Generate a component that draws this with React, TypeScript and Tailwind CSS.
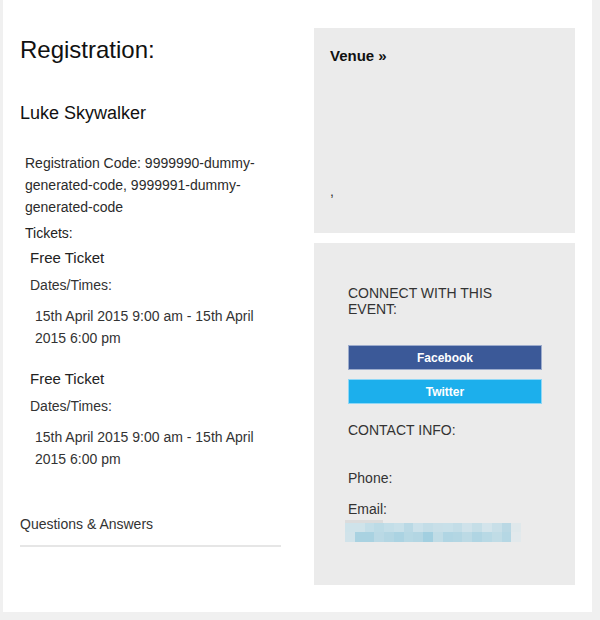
import React from "react";

const row1 = [
  "bg-[#cfe3ea]", "bg-[#cfe3ea]", "bg-[#c3dee8]", "bg-[#bcdbe6]", "bg-[#c3dee8]", "bg-[#c8e0e9]",
  "bg-[#bad9e5]", "bg-[#cbe1ea]", "bg-[#c3dde7]", "bg-[#c8dfe8]", "bg-[#c8e0e9]", "bg-[#c3dde7]",
  "bg-[#cfe2ea]", "bg-[#c5dee7]", "bg-[#d3e4eb]", "bg-[#c8dfe8]", "bg-[#bad8e4]", "bg-[#dfe8eb]",
];
const row2 = [
  "bg-[#d1e3ea]", "bg-[#a9d2e1]", "bg-[#a9d2e1]", "bg-[#bad9e5]", "bg-[#b3d6e3]", "bg-[#abd3e2]",
  "bg-[#b6d8e4]", "bg-[#b3d6e3]", "bg-[#a2cfe0]", "bg-[#c0dce6]", "bg-[#b0d5e3]", "bg-[#b3d6e3]",
  "bg-[#bcdae5]", "bg-[#b0d5e3]", "bg-[#b8d9e5]", "bg-[#c0dce6]", "bg-[#b5d7e4]", "bg-[#e2e9ec]",
];

function BlurredEmail() {
  return (
    <div className="mt-[1px] -ml-[3px] w-[176px]">
      <div className="flex h-[3px]">
        <div className="w-[38px] bg-[#dcdcdc]" />
      </div>
      <div className="flex h-[9px]">
        {row1.map((c, i) => (
          <div key={i} className={`${c} flex-1`} />
        ))}
      </div>
      <div className="flex h-[10px]">
        {row2.map((c, i) => (
          <div key={i} className={`${c} flex-1`} />
        ))}
      </div>
    </div>
  );
}

function Ticket() {
  return (
    <>
      <div className="pl-[10px] text-[15px] leading-[22px] text-[#222]">Free Ticket</div>
      <div className="mt-[5px] pl-[10px] text-[14px] leading-[22px] text-[#333]">Dates/Times:</div>
      <div className="mt-[9px] pl-[15px] text-[14px] leading-[22px] text-[#333]">
        15th April 2015 9:00 am - 15th April 2015 6:00 pm
      </div>
    </>
  );
}

export default function App() {
  return (
    <div
      className="min-h-[620px] w-[600px] bg-[#f0f0f0]"
      style={{ fontFamily: '"Liberation Sans", Arial, sans-serif' }}
    >
      <div className="ml-[3px] flex h-[612px] w-[589px] bg-white">
        {/* Left column */}
        <div className="w-[311px] pl-[17px] pr-[33px]">
          <h1 className="mt-[36px] text-[24px] leading-[28px] text-[#111]">Registration:</h1>
          <h2 className="mt-[38px] text-[18px] leading-[22px] text-[#111]">Luke Skywalker</h2>
          <div className="mt-[28px] pl-[5px] text-[14px] leading-[22px] text-[#2b2b2b]">
            Registration Code: 9999990-dummy-generated-code, 9999991-dummy-generated-code
          </div>
          <div className="mt-[4px] pl-[5px] text-[14px] leading-[22px] text-[#222]">Tickets:</div>
          <div className="mt-[3px]">
            <Ticket />
          </div>
          <div className="mt-[19px]">
            <Ticket />
          </div>
          <div className="mt-[43px] text-[14px] leading-[22px] text-[#333]">Questions &amp; Answers</div>
          <div className="mt-[10px] h-[2px] bg-[#e6e6e6]" />
        </div>

        {/* Right column */}
        <div className="flex w-[261px] flex-col gap-[10px] pt-[28px]">
          <div className="h-[205px] bg-[#ebebeb] pl-[16px]">
            <div className="mt-[18px] text-[15px] font-bold leading-[20px] text-[#111]">Venue »</div>
            <div className="mt-[115px] text-[14px] leading-[20px] text-[#333]">,</div>
          </div>
          <div className="h-[342px] bg-[#ebebeb] pl-[34px] pr-[33px]">
            <div className="mt-[42px] text-[14px] leading-[16px] text-[#333]">CONNECT WITH THIS EVENT:</div>
            <div className="mt-[28px] flex h-[25px] items-center justify-center border border-white/50 bg-[#3b5998] text-[12px] font-bold text-white">
              Facebook
            </div>
            <div className="mt-[9px] flex h-[25px] items-center justify-center border border-white/50 bg-[#1cafec] text-[12px] font-bold text-white">
              Twitter
            </div>
            <div className="mt-[18px] text-[14px] leading-[16px] text-[#333]">CONTACT INFO:</div>
            <div className="mt-[30px] text-[14px] leading-[20px] text-[#333]">Phone:</div>
            <div className="mt-[11px] text-[14px] leading-[20px] text-[#333]">Email:</div>
            <BlurredEmail />
          </div>
        </div>
      </div>
    </div>
  );
}
